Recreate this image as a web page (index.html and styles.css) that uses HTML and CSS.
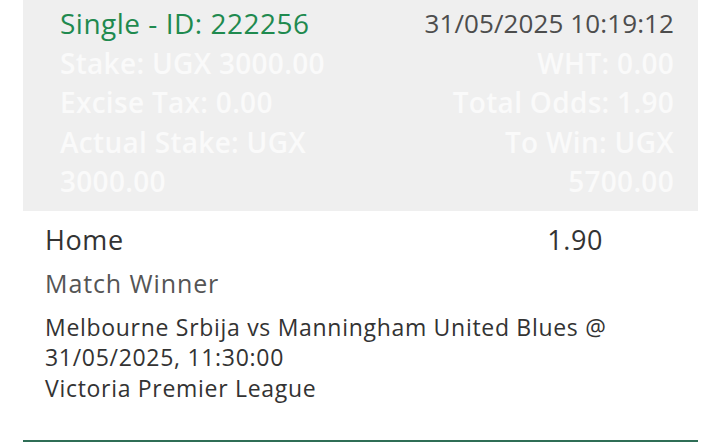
FILE: index.html
```html
<!DOCTYPE html>
<html lang="en">

<head>
    <meta charset="UTF-8">
    <meta name="viewport" content="width=device-width, initial-scale=1.0">
    <title>Bet Slip</title>
    <link rel="stylesheet" href="styles.css">
</head>

<body>
    <div class="slip">
        <div class="slip-head">
            <div class="cell left title">Single - ID: 222256</div>
            <div class="cell right date">31/05/2025 10:19:12</div>
            <div class="cell left">Stake: UGX 3000.00</div>
            <div class="cell right">WHT: 0.00</div>
            <div class="cell left">Excise Tax: 0.00</div>
            <div class="cell right">Total Odds: 1.90</div>
            <div class="cell left">Actual Stake: UGX 3000.00</div>
            <div class="cell right">To Win: UGX 5700.00</div>
        </div>
        <div class="slip-body">
            <div class="pick">
                <span class="pick-name">Home</span>
                <span class="pick-odds">1.90</span>
            </div>
            <div class="market">Match Winner</div>
            <div class="event">
                Melbourne Srbija vs Manningham United Blues @ 31/05/2025, 11:30:00<br>
                Victoria Premier League
            </div>
        </div>
    </div>
    <div class="slip next"></div>
</body>

</html>
```

FILE: styles.css
```css
body {
    font-family: "Open Sans", Arial, sans-serif;
    margin: 0;
    padding: 0;
    background-color: #fff;
    overflow: hidden;
}

.slip {
    margin: 0 22px 0 23px;
}

.slip-head {
    background-color: #efefef;
    display: grid;
    grid-template-columns: 1fr 1fr;
    column-gap: 70px;
    padding: 4px 24px 9px 37px;
    font-size: 28px;
    letter-spacing: 0.3px;
    line-height: 39.5px;
    color: #fafafa;
    font-weight: 600;
}

.cell {
    white-space: normal;
}

.cell.right {
    text-align: right;
}

.title,
.date {
    white-space: nowrap;
}

.title {
    color: #1f8a4f;
    font-weight: 500;
    letter-spacing: 0.5px;
}

.date {
    color: #4d4d4d;
    font-weight: 500;
    font-size: 26px;
    letter-spacing: 0.1px;
}

.slip-body {
    padding: 10px 20px 37px 22px;
    color: #333;
}

.pick {
    display: flex;
    justify-content: space-between;
    padding-right: 75px;
    font-size: 27px;
    letter-spacing: 0.6px;
    line-height: 38px;
}

.market {
    font-size: 25px;
    letter-spacing: 0.9px;
    line-height: 40px;
    color: #555;
    margin: 4px 0 9px;
}

.event {
    font-size: 23px;
    letter-spacing: 0.7px;
    line-height: 30.5px;
}

.slip.next {
    border-top: 3px solid #2f6e56;
    height: 20px;
}
```
